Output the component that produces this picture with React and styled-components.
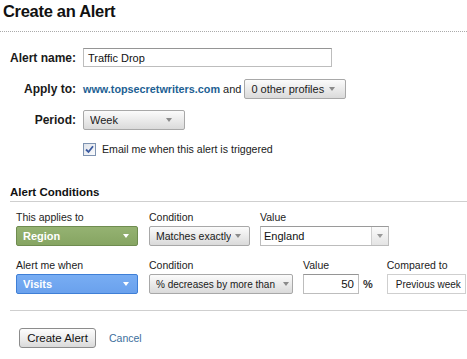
import React from "react";
import styled, { createGlobalStyle, css } from "styled-components";

const GlobalStyle = createGlobalStyle`
  html, body {
    margin: 0;
    padding: 0;
    background: #fff;
  }
  body {
    font-family: "Liberation Sans", Arial, sans-serif;
    color: #1a1a1a;
  }
`;

const Page = styled.div`
  width: 467px;
  height: 359px;
  overflow: hidden;
`;

const Title = styled.h1`
  margin: 0;
  height: 31px;
  padding-left: 3px;
  font-size: 16.5px;
  line-height: 23px;
  font-weight: bold;
  color: #111;
  letter-spacing: -0.3px;
  border-bottom: 1px dotted #aaa;
`;

const FormGrid = styled.div`
  display: grid;
  grid-template-columns: 76px 1fr;
  grid-auto-rows: 31px;
  column-gap: 7px;
  padding-top: 10px;
  align-items: center;
`;

const FieldLabel = styled.label`
  justify-self: end;
  font-size: 12px;
  font-weight: bold;
  color: #1a1a1a;
`;

const Controls = styled.div`
  display: flex;
  align-items: center;
  font-size: 11px;
`;

const TextInput = styled.div`
  box-sizing: border-box;
  width: ${(p) => p.$width}px;
  height: ${(p) => p.$height || 19}px;
  display: flex;
  align-items: center;
  justify-content: ${(p) => (p.$right ? "flex-end" : "flex-start")};
  padding: 0 4px;
  border: 1px solid #bdbdbd;
  border-top-color: #959595;
  background: #fff;
  font-size: ${(p) => p.$size || 11}px;
  color: #111;
`;

const SiteLink = styled.a`
  color: #1d5f93;
  font-weight: bold;
  font-size: 10.8px;
  text-decoration: none;
`;

const And = styled.span`
  margin: 0 3px;
  font-size: 11px;
  color: #222;
`;

const selectSkins = {
  gray: css`
    background: linear-gradient(#fbfbfb, #e9e9e9 55%, #dadada);
    border: 1px solid #a8a8a8;
    color: #1a1a1a;
  `,
  green: css`
    background: linear-gradient(#95b272, #86a562);
    border: 1px solid #6f8c50;
    color: #fff;
    font-weight: bold;
  `,
  blue: css`
    background: linear-gradient(#78adf3, #6aa1ed);
    border: 1px solid #3f7fd6;
    color: #fff;
    font-weight: bold;
  `,
};

const Select = styled.div`
  box-sizing: border-box;
  width: ${(p) => p.$width}px;
  height: 20px;
  display: flex;
  align-items: center;
  padding: 0 ${(p) => (p.$tight ? 3 : 6)}px 0 6px;
  border-radius: 2px;
  font-size: ${(p) => p.$size || 11}px;
  ${(p) => selectSkins[p.$skin || "gray"]}
`;

const SelectText = styled.span`
  flex: 1;
  white-space: nowrap;
  overflow: hidden;
`;

const Arrow = styled.span`
  flex: none;
  width: 0;
  height: 0;
  margin-left: ${(p) => (p.$left === undefined ? 4 : p.$left)}px;
  margin-right: ${(p) => p.$right || 0}px;
  border-left: 3.5px solid transparent;
  border-right: 3.5px solid transparent;
  border-top: 4px solid ${(p) => p.$color || "#8a8a8a"};
`;

const CheckRow = styled.div`
  display: flex;
  align-items: center;
  gap: 6px;
  font-size: 10.6px;
  color: #1a1a1a;
  margin-top: -3px;
`;

const CheckBox = styled.span`
  box-sizing: border-box;
  width: 13px;
  height: 13px;
  border: 1px solid #7e93b1;
  background: linear-gradient(135deg, #dfe3ea, #fafbfd);
  display: flex;
  align-items: center;
  justify-content: center;
`;

const SectionHead = styled.div`
  margin: 19px 0 0 10px;
  font-size: 11.5px;
  font-weight: bold;
  line-height: 14px;
  padding-bottom: 2px;
  color: #111;
  border-bottom: 1px solid #cfcfcf;
`;

const Conditions = styled.div`
  margin-left: 10px;
  padding: 8px 0 16px 6px;
  border-bottom: 1px solid #cfcfcf;
  display: flex;
  flex-direction: column;
  gap: 12px;
`;

const CondRow = styled.div`
  display: flex;
  align-items: flex-end;
`;

const Field = styled.div`
  display: flex;
  flex-direction: column;
  margin-right: ${(p) => p.$gap || 0}px;
`;

const SmallLabel = styled.div`
  font-size: 10.5px;
  line-height: 14px;
  margin-bottom: 2px;
  color: #222;
`;

const Combo = styled.div`
  box-sizing: border-box;
  width: ${(p) => p.$width}px;
  height: 20px;
  display: flex;
  border: 1px solid #bcbcbc;
  border-top-color: #9a9a9a;
  background: #fff;
`;

const ComboText = styled.span`
  flex: 1;
  display: flex;
  align-items: center;
  padding-left: 3px;
  font-size: 11px;
  color: #111;
`;

const ComboButton = styled.span`
  width: 16px;
  display: flex;
  align-items: center;
  justify-content: center;
  border-left: 1px solid #d0d0d0;
  background: linear-gradient(#fbfbfb, #e4e4e4);
`;

const ValueWrap = styled.div`
  display: flex;
  align-items: center;
`;

const Percent = styled.span`
  margin-left: 4px;
  font-size: 11px;
  font-weight: bold;
  color: #333;
`;

const Plain = styled.div`
  box-sizing: border-box;
  width: ${(p) => p.$width}px;
  height: 20px;
  display: flex;
  align-items: center;
  padding-left: 8px;
  border: 1px solid #cfcfcf;
  background: #fff;
  font-size: 10px;
  color: #1a1a1a;
  white-space: nowrap;
`;

const Footer = styled.div`
  display: flex;
  align-items: center;
  padding: 17px 0 0 19px;
  gap: 13px;
`;

const Button = styled.button`
  box-sizing: border-box;
  width: 77px;
  height: 20px;
  padding: 0;
  border: 1px solid #8c8c8c;
  border-radius: 3px;
  background: linear-gradient(#fdfdfd, #ececec 55%, #d9d9d9);
  font-family: "Liberation Sans", Arial, sans-serif;
  font-size: 11.5px;
  color: #111;
`;

const Cancel = styled.a`
  color: #3b6e9c;
  font-size: 10.5px;
  text-decoration: none;
`;

export default function App() {
  return (
    <Page>
      <GlobalStyle />
      <Title>Create an Alert</Title>

      <FormGrid>
        <FieldLabel>Alert name:</FieldLabel>
        <Controls>
          <TextInput $width={249}>Traffic Drop</TextInput>
        </Controls>

        <FieldLabel>Apply to:</FieldLabel>
        <Controls>
          <SiteLink href="#">www.topsecretwriters.com</SiteLink>
          <And>and</And>
          <Select $width={102}>
            <SelectText>0 other profiles</SelectText>
            <Arrow $right={4} />
          </Select>
        </Controls>

        <FieldLabel>Period:</FieldLabel>
        <Controls>
          <Select $width={102}>
            <SelectText>Week</SelectText>
            <Arrow $right={6} />
          </Select>
        </Controls>

        <span />
        <CheckRow>
          <CheckBox>
            <svg width="9" height="9" viewBox="0 0 9 9">
              <path d="M1 4.5 L3.5 7 L8 1.2" fill="none" stroke="#3b5aa0" strokeWidth="1.8" />
            </svg>
          </CheckBox>
          Email me when this alert is triggered
        </CheckRow>
      </FormGrid>

      <SectionHead>Alert Conditions</SectionHead>
      <Conditions>
        <CondRow>
          <Field $gap={11}>
            <SmallLabel>This applies to</SmallLabel>
            <Select $width={122} $skin="green">
              <SelectText>Region</SelectText>
              <Arrow $color="#fff" $right={2} />
            </Select>
          </Field>
          <Field $gap={10}>
            <SmallLabel>Condition</SmallLabel>
            <Select $width={101} $size={10.5}>
              <SelectText>Matches exactly</SelectText>
              <Arrow $right={2} />
            </Select>
          </Field>
          <Field>
            <SmallLabel>Value</SmallLabel>
            <Combo $width={129}>
              <ComboText>England</ComboText>
              <ComboButton>
                <Arrow $left={0} $color="#999" />
              </ComboButton>
            </Combo>
          </Field>
        </CondRow>

        <CondRow>
          <Field $gap={11}>
            <SmallLabel>Alert me when</SmallLabel>
            <Select $width={122} $skin="blue">
              <SelectText>Visits</SelectText>
              <Arrow $color="#fff" $right={2} />
            </Select>
          </Field>
          <Field $gap={10}>
            <SmallLabel>Condition</SmallLabel>
            <Select $width={144} $size={10} $tight>
              <SelectText>% decreases by more than</SelectText>
              <Arrow $left={2} />
            </Select>
          </Field>
          <Field $gap={14}>
            <SmallLabel>Value</SmallLabel>
            <ValueWrap>
              <TextInput $width={56} $height={20} $right $size={11.5}>
                50
              </TextInput>
              <Percent>%</Percent>
            </ValueWrap>
          </Field>
          <Field>
            <SmallLabel>Compared to</SmallLabel>
            <Plain $width={79}>Previous week</Plain>
          </Field>
        </CondRow>
      </Conditions>

      <Footer>
        <Button type="button">Create Alert</Button>
        <Cancel href="#">Cancel</Cancel>
      </Footer>
    </Page>
  );
}
